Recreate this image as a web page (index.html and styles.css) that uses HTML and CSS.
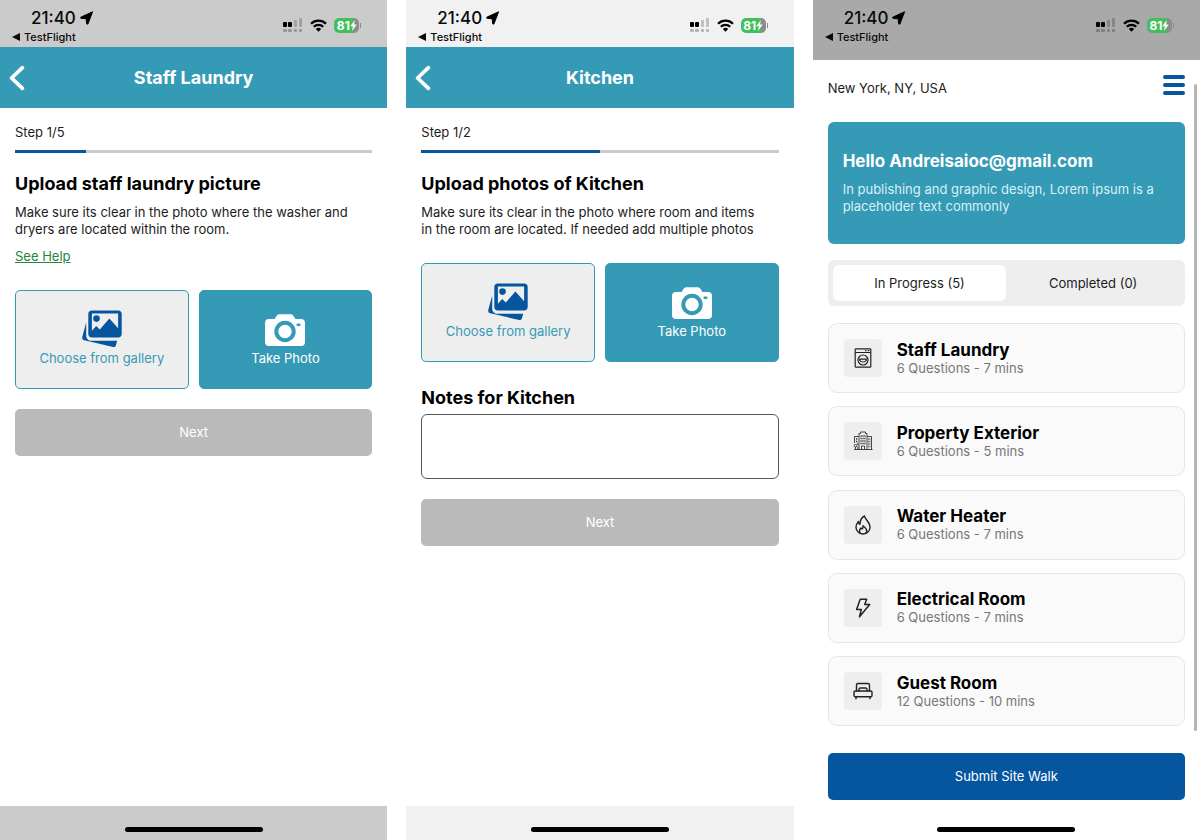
FILE: index.html
```html
<!DOCTYPE html>
<html lang="en">
<head>
<meta charset="utf-8">
<meta name="viewport" content="width=device-width, initial-scale=1">
<title>Site Walk</title>
<link rel="stylesheet" href="styles.css">
</head>
<body>
<svg class="sprite" aria-hidden="true">
  <symbol id="i-location" viewBox="0 0 14 14"><path d="M12.600.8 8 12.800c-.3.700-1.300.6-1.400-.2L6.200 7.800 1.200 7.400C.4 7.300.3 6.400 1 6.100z" fill="#000" stroke="#000" stroke-linejoin="round"/></symbol>
  <symbol id="i-signal" viewBox="0 0 20 15">
    <g fill="#000"><rect x="0" y="4" width="4" height="5" rx="1"/><rect x="5" y="4" width="4" height="5" rx="1"/></g>
    <g fill="#000" opacity=".2"><rect x="11" y="2" width="3" height="7" rx="1"/><rect x="16" y="0" width="3" height="9" rx="1"/></g>
    <g fill="#000" opacity=".25"><rect x="0" y="11" width="4" height="3" rx="1"/><rect x="5" y="11" width="4" height="3" rx="1"/><rect x="11" y="11" width="3" height="3" rx="1"/><rect x="16" y="11" width="3" height="3" rx="1"/></g>
  </symbol>
  <symbol id="i-wifi" viewBox="0 0 17 13"><g fill="none" stroke="#000" stroke-width="2.300"><path d="M1 4.700a10.700 10.700 0 0 1 15 0"/><path d="M3.800 7.800a6.700 6.700 0 0 1 9.400 0"/></g><path d="M8.500 12.700 5.800 10a3.900 3.900 0 0 1 5.400 0z" fill="#000"/></symbol>
  <symbol id="i-bolt-fill" viewBox="0 0 7 11"><path d="M4.800 0 .3 6.200h2.600L2 11l4.700-6.400H4z" fill="#fff"/></symbol>
  <symbol id="i-back" viewBox="0 0 16 24"><path d="M13 2.500 3 12l10 9.500" fill="none" stroke="#fff" stroke-width="3.500" stroke-linecap="round" stroke-linejoin="round"/></symbol>
  <symbol id="i-gallery" viewBox="0 0 40 37">
    <path d="M4.200 12.500.3 26.800c-.4 1.700.4 3 2 3.500L31.200 37c1.300.3 2.300-.3 2.700-1.600l1.300-4.600H9.500c-3.200 0-5.300-2.200-5.300-5.300z" fill="#06569f"/>
    <path fill-rule="evenodd" d="M10 .5h26a3.700 3.700 0 0 1 3.700 3.700v19.600a3.700 3.700 0 0 1-3.700 3.700H10a3.700 3.700 0 0 1-3.700-3.700V4.200A3.700 3.700 0 0 1 10 .5zm-.1 3v17.300l4.300-4.900 3.600 3.500 9.600-10.900 8.700 9.700V3.500z" fill="#06569f"/>
    <circle cx="14.500" cy="8.600" r="3.300" fill="#06569f"/>
  </symbol>
  <symbol id="i-camera" viewBox="0 0 40 33">
    <path d="M4 5h5.500l2.300-3.400C12.500.6 13.500.2 14.600.2h10.800c1.100 0 2.100.4 2.800 1.400L30.500 5H36a4 4 0 0 1 4 4v19a4 4 0 0 1-4 4H4a4 4 0 0 1-4-4V9a4 4 0 0 1 4-4z" fill="#fff"/>
    <circle cx="20" cy="17.500" r="8.700" fill="#fff" stroke="#359ab5" stroke-width="4"/><rect x="31.500" y="9.500" width="4" height="2.600" rx="1.200" fill="#359ab5"/>
  </symbol>
  <symbol id="i-washer" viewBox="0 0 20 20"><g fill="none" stroke="#222" stroke-width="1.200"><rect x="2.200" y=".8" width="15.600" height="18.400" rx=".8"/><path d="M2.200 4.500h15.600M12 2.700h1.400M14.800 2.700h1.400"/><circle cx="10" cy="12" r="5"/><path d="M6.800 11.200h6.400v1.300c-1 2-5.400 2-6.400 0z"/></g></symbol>
  <symbol id="i-building" viewBox="0 0 20 20"><g fill="none" stroke="#333" stroke-width=".9"><path d="M6 18.500V2.500h1.500V1h5v1.500H14v16M14 5.500h4.500v13M6 5.500H1.500V12M1 18.500h18.500M8.500 18.500V15h3v3.500"/><path d="M2.500 18.500V16M1.200 14.700a1.300 1.300 0 1 1 2.600 0 1.300 1.300 0 0 1-2.600 0zM4.800 18.500v-3"/><path d="M7.500 5h5M7.500 7.500h5M7.500 10h5M7.500 12.500h5M15.300 8h2.200M15.300 10.500h2.200M15.300 13h2.200M15.300 15.500h2.200M3 8h2M3 10.500h2M4 13h1.500" stroke-width="1.300" stroke-dasharray="1.200 .7"/></g></symbol>
  <symbol id="i-flame" viewBox="0 0 20 20"><g fill="none" stroke="#222" stroke-width="1.400" stroke-linejoin="round" stroke-linecap="round"><path d="M11.500 1c.1 3 5.500 6 5.500 11.200A6.800 6.800 0 0 1 10 19a6.800 6.800 0 0 1-7-6.700c0-2.300 1-4.200 2.500-5.800.1 1.500.6 2.300 1.500 2.800C7 5.500 8.500 2.500 11.500 1z"/><path d="M7.200 18.200c-1.800-2.600-.2-4.200.8-5.200.4.600.8.900 1.300.9.600-.7.800-1.900.7-3.200 2.300 1.700 5.300 4.800 2.800 7.500"/></g></symbol>
  <symbol id="i-bolt" viewBox="0 0 20 20"><path d="M7.200 1.200h6.500l-2 5.200h5L6.500 18.800l1.800-7.200H3.600z" fill="none" stroke="#222" stroke-width="1.500" stroke-linejoin="round"/></symbol>
  <symbol id="i-bed" viewBox="0 0 20 20"><g fill="none" stroke="#222" stroke-width="1.400" stroke-linejoin="round" stroke-linecap="round"><path d="M3.500 10V4A1.500 1.500 0 0 1 5 2.500h10A1.500 1.500 0 0 1 16.500 4v6M6 10V8.300A1.300 1.300 0 0 1 7.300 7h5.400A1.300 1.300 0 0 1 14 8.300V10"/><rect x="1" y="10" width="18" height="5.700" rx="1.300"/><path d="M3 15.700v2M17 15.700v2"/></g></symbol>
</svg>

<main class="board">
  <section class="screen screen--grey">
    <div class="status">
      <div class="status__left">
        <div class="clock">21:40 <svg class="clock__icon"><use href="#i-location"/></svg></div>
        <div class="return"><span class="return__mark"></span>TestFlight</div>
      </div>
      <div class="status__right">
        <svg class="signal"><use href="#i-signal"/></svg>
        <svg class="wifi"><use href="#i-wifi"/></svg>
        <span class="battery">81<svg class="battery__bolt"><use href="#i-bolt-fill"/></svg></span>
      </div>
    </div>
    <header class="appbar">
      <button class="appbar__back" type="button" aria-label="Back"><svg><use href="#i-back"/></svg></button>
      <h1 class="appbar__title">Staff Laundry</h1>
    </header>
    <div class="content">
      <p class="step">Step 1/5</p>
      <div class="progress"><div class="progress__fill" style="width:20%"></div></div>
      <h2 class="heading">Upload staff laundry picture</h2>
      <p class="text">Make sure its clear in the photo where the washer and dryers are located within the room.</p>
      <a class="help" href="#">See Help</a>
      <div class="actions">
        <button class="action action--gallery" type="button"><svg class="icon-gallery"><use href="#i-gallery"/></svg>Choose from gallery</button>
        <button class="action action--photo" type="button"><svg class="icon-camera"><use href="#i-camera"/></svg>Take Photo</button>
      </div>
      <button class="button" type="button" disabled>Next</button>
    </div>
    <footer class="home"><span class="home__bar"></span></footer>
  </section>

  <section class="screen screen--light">
    <div class="status">
      <div class="status__left">
        <div class="clock">21:40 <svg class="clock__icon"><use href="#i-location"/></svg></div>
        <div class="return"><span class="return__mark"></span>TestFlight</div>
      </div>
      <div class="status__right">
        <svg class="signal"><use href="#i-signal"/></svg>
        <svg class="wifi"><use href="#i-wifi"/></svg>
        <span class="battery">81<svg class="battery__bolt"><use href="#i-bolt-fill"/></svg></span>
      </div>
    </div>
    <header class="appbar">
      <button class="appbar__back" type="button" aria-label="Back"><svg><use href="#i-back"/></svg></button>
      <h1 class="appbar__title">Kitchen</h1>
    </header>
    <div class="content">
      <p class="step">Step 1/2</p>
      <div class="progress"><div class="progress__fill" style="width:50%"></div></div>
      <h2 class="heading">Upload photos of Kitchen</h2>
      <p class="text">Make sure its clear in the photo where room and items in the room are located. If needed add multiple photos</p>
      <div class="actions">
        <button class="action action--gallery" type="button"><svg class="icon-gallery"><use href="#i-gallery"/></svg>Choose from gallery</button>
        <button class="action action--photo" type="button"><svg class="icon-camera"><use href="#i-camera"/></svg>Take Photo</button>
      </div>
      <label class="notes-label" for="notes">Notes for Kitchen</label>
      <textarea class="notes" id="notes"></textarea>
      <button class="button" type="button" disabled>Next</button>
    </div>
    <footer class="home"><span class="home__bar"></span></footer>
  </section>

  <section class="screen screen--dashboard">
    <div class="status">
      <div class="status__left">
        <div class="clock">21:40 <svg class="clock__icon"><use href="#i-location"/></svg></div>
        <div class="return"><span class="return__mark"></span>TestFlight</div>
      </div>
      <div class="status__right">
        <svg class="signal"><use href="#i-signal"/></svg>
        <svg class="wifi"><use href="#i-wifi"/></svg>
        <span class="battery">81<svg class="battery__bolt"><use href="#i-bolt-fill"/></svg></span>
      </div>
    </div>
    <div class="dashboard">
      <header class="place">
        <span>New York, NY, USA</span>
        <button class="menu" type="button" aria-label="Menu"><span></span><span></span><span></span></button>
      </header>
      <div class="hero">
        <h1 class="hero__title">Hello Andreisaioc@gmail.com</h1>
        <p class="hero__text">In publishing and graphic design, Lorem ipsum is a placeholder text commonly</p>
      </div>
      <div class="tabs" role="tablist">
        <button class="tab tab--active" type="button" role="tab" aria-selected="true">In Progress (5)</button>
        <button class="tab" type="button" role="tab" aria-selected="false">Completed (0)</button>
      </div>
      <ul class="list">
        <li class="card"><span class="card__icon"><svg><use href="#i-washer"/></svg></span><div><h2 class="card__title">Staff Laundry</h2><p class="card__meta">6 Questions - 7 mins</p></div></li>
        <li class="card"><span class="card__icon"><svg><use href="#i-building"/></svg></span><div><h2 class="card__title">Property Exterior</h2><p class="card__meta">6 Questions - 5 mins</p></div></li>
        <li class="card"><span class="card__icon"><svg><use href="#i-flame"/></svg></span><div><h2 class="card__title">Water Heater</h2><p class="card__meta">6 Questions - 7 mins</p></div></li>
        <li class="card"><span class="card__icon"><svg><use href="#i-bolt"/></svg></span><div><h2 class="card__title">Electrical Room</h2><p class="card__meta">6 Questions - 7 mins</p></div></li>
        <li class="card"><span class="card__icon"><svg><use href="#i-bed"/></svg></span><div><h2 class="card__title">Guest Room</h2><p class="card__meta">12 Questions - 10 mins</p></div></li>
      </ul>
      <button class="button button--primary" type="button">Submit Site Walk</button>
      <div class="scrollbar"></div>
    </div>
    <footer class="home"><span class="home__bar"></span></footer>
  </section>
</main>
</body>
</html>
```

FILE: styles.css
```css
* { box-sizing: border-box; }

body {
  margin: 0;
  background: #fff;
  color: #1c1c1c;
  font-family: Inter, "Liberation Sans", sans-serif;
  font-size: 13px;
  line-height: 17px;
}

h1, h2, p, ul { margin: 0; padding: 0; }
button { border: 0; padding: 0; font: inherit; color: inherit; background: none; cursor: pointer; }
svg { display: block; }
.sprite { position: absolute; width: 0; height: 0; }

.board {
  display: grid;
  grid-template-columns: repeat(3, 1fr);
  gap: 19px;
  min-height: 100vh;
}

.screen { display: flex; flex-direction: column; background: #fff; min-width: 0; }
.screen--grey { --system: #cbcbcb; }
.screen--light { --system: #f1f1f1; }
.screen--dashboard { --system: #a9a9a9; }

/* Status bar */
.status {
  display: flex;
  justify-content: space-between;
  align-items: flex-start;
  min-height: 47px;
  padding: 8px 28px 0 12px;
  background: var(--system);
  color: #0a0a0a;
}
.screen--dashboard .status { min-height: 60px; }
.clock {
  display: flex;
  align-items: center;
  gap: 4px;
  padding-left: 19px;
  font-size: 17px;
  line-height: 20px;
  font-weight: 500;
}
.clock__icon { width: 14px; height: 14px; }
.return { display: flex; align-items: center; gap: 4px; font-size: 11px; font-weight: 500; line-height: 18px; }
.return__mark { border: 4px solid transparent; border-right: 8px solid #0a0a0a; border-left: 0; }
.status__right { display: flex; align-items: center; gap: 7px; padding-top: 10px; }
.signal { width: 20px; height: 15px; }
.wifi { width: 17px; height: 13px; }
.battery {
  position: relative;
  display: flex;
  align-items: center;
  justify-content: center;
  width: 25px;
  height: 15px;
  border-radius: 5px;
  background: linear-gradient(90deg, #43bf60 80%, #8c8c8c 80%);
  color: #fff;
  font-size: 12px;
  font-weight: 700;
  line-height: 15px;
}
.battery::after {
  content: "";
  position: absolute;
  right: -2px;
  top: 5px;
  width: 1px;
  height: 5px;
  background: #8c8c8c;
}
.battery__bolt { width: 7px; height: 11px; }

/* App bar */
.appbar {
  display: grid;
  grid-template-columns: 29px 1fr 29px;
  align-items: center;
  height: 61px;
  background: #359ab5;
  color: #fff;
}
.appbar__back { justify-self: end; }
.appbar__back svg { width: 24px; height: 26px; }
.appbar__title { font-size: 18px; line-height: 22px; font-weight: 700; text-align: center; }

/* Form screens */
.content { flex: 1; padding: 16px 15px; display: flex; flex-direction: column; }
.progress { height: 3px; margin-top: 9px; background: #cbcbcb; }
.progress__fill { height: 100%; background: #06569f; }
.heading { margin-top: 20px; }
.heading, .notes-label { color: #000; font-size: 18px; line-height: 22px; font-weight: 700; }
.text { margin-top: 9px; padding-right: 10px; }
.help { align-self: flex-start; margin-top: 10px; color: #23863a; text-decoration: underline; }
.actions { display: grid; grid-template-columns: 1fr 1fr; gap: 10px; margin-top: 25px; }
.action {
  display: flex;
  flex-direction: column;
  align-items: center;
  justify-content: flex-end;
  gap: 3px;
  height: 99px;
  padding-bottom: 21px;
  border: 1px solid #359ab5;
  border-radius: 5px;
}
.action--gallery { background: #eee; color: #359ab5; }
.action--photo { background: #359ab5; color: #fff; }
.icon-gallery { width: 40px; height: 37px; }
.icon-camera { width: 40px; height: 33px; }
.button {
  height: 47px;
  margin-top: 20px;
  border-radius: 5px;
  background: #bababa;
  color: #fff;
}
.button--primary { width: 100%; margin-top: 27px; background: #06569f; }
.notes-label { margin-top: 25px; }
.notes {
  height: 65px;
  margin-top: 5px;
  padding: 8px;
  border: 1px solid #555;
  border-radius: 6px;
  background: #fff;
  font: inherit;
  resize: none;
}

/* Dashboard */
.dashboard { position: relative; flex: 1; display: flex; flex-direction: column; padding: 15px 15px 6px; }
.place { display: flex; justify-content: space-between; align-items: flex-start; min-height: 47px; }
.place > span { padding-top: 5px; }
.menu { display: grid; gap: 4px; width: 22px; }
.menu span { height: 4px; border-radius: 2px; background: #06569f; }
.hero { padding: 28px 15px 29px; border-radius: 6px; background: #359ab5; color: #fff; }
.hero__title { font-size: 17px; line-height: 22px; font-weight: 700; }
.hero__text { margin-top: 9px; color: #d9f1f6; }
.tabs { display: grid; grid-template-columns: 1fr 1fr; margin-top: 16px; padding: 5px; border-radius: 6px; background: #eee; }
.tab { height: 36px; border-radius: 6px; }
.tab--active { background: #fff; }
.list { flex: 1; display: flex; flex-direction: column; justify-content: space-between; gap: 13px; margin-top: 17px; list-style: none; }
.card {
  display: flex;
  align-items: center;
  gap: 15px;
  height: 70px;
  padding: 0 15px;
  border: 1px solid #e6e6e6;
  border-radius: 9px;
  background: #fafafa;
}
.card__icon { display: grid; place-items: center; width: 38px; height: 38px; border-radius: 4px; background: #eee; }
.card__icon svg { width: 20px; height: 20px; }
.card__title { color: #000; font-size: 17px; line-height: 20px; font-weight: 700; }
.card__meta { color: #777; }
.scrollbar { position: absolute; top: 24px; bottom: 75px; right: 3px; width: 3px; border-radius: 2px; background: #b5b5b5; }

/* Home indicator */
.home { display: flex; justify-content: center; align-items: center; height: 34px; padding-top: 12px; background: var(--system); }
.screen--dashboard .home { background: #fff; }
.home__bar { width: 138px; height: 5px; border-radius: 3px; background: #000; }
```
